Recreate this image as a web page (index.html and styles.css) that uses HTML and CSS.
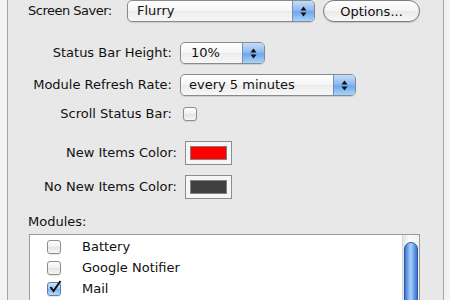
FILE: index.html
```html
<!DOCTYPE html>
<html lang="en">
  <head>
    <meta charset="UTF-8" />
    <title>Preferences</title>
    <link rel="stylesheet" href="styles.css">
  </head>
  <body>
    <div class="window">

      <div class="row row-saver">
        <span class="label label-saver">Screen Saver:</span>
        <div class="popup popup-saver">
          <span class="popup-text">Flurry</span>
          <span class="popup-arrows">
            <svg width="7" height="11" viewBox="0 0 7 11"><path d="M3.5 0.5L6.5 4.5H0.5Z M0.5 6.5H6.5L3.5 10.5Z" fill="#111"/></svg>
          </span>
        </div>
        <button class="push">Options...</button>
      </div>

      <div class="row row-height">
        <span class="label label-mid">Status Bar Height:</span>
        <div class="popup popup-height">
          <span class="popup-text">10%</span>
          <span class="popup-arrows">
            <svg width="7" height="11" viewBox="0 0 7 11"><path d="M3.5 0.5L6.5 4.5H0.5Z M0.5 6.5H6.5L3.5 10.5Z" fill="#111"/></svg>
          </span>
        </div>
      </div>

      <div class="row row-rate">
        <span class="label label-mid">Module Refresh Rate:</span>
        <div class="popup popup-rate">
          <span class="popup-text">every 5 minutes</span>
          <span class="popup-arrows">
            <svg width="7" height="11" viewBox="0 0 7 11"><path d="M3.5 0.5L6.5 4.5H0.5Z M0.5 6.5H6.5L3.5 10.5Z" fill="#111"/></svg>
          </span>
        </div>
      </div>

      <div class="row row-scroll">
        <span class="label label-mid">Scroll Status Bar:</span>
        <span class="check check-scroll"></span>
      </div>

      <div class="row row-color row-color-first">
        <span class="label label-color">New Items Color:</span>
        <span class="well"><span class="swatch swatch-red"></span></span>
      </div>

      <div class="row row-color">
        <span class="label label-color">No New Items Color:</span>
        <span class="well"><span class="swatch swatch-dark"></span></span>
      </div>

      <div class="modules-title">Modules:</div>

      <div class="list">
        <div class="list-rows">
          <div class="item"><span class="check"></span><span class="item-name">Battery</span></div>
          <div class="item"><span class="check"></span><span class="item-name">Google Notifier</span></div>
          <div class="item">
            <span class="check checked">
              <svg class="tick" width="14" height="14" viewBox="0 0 14 14"><path d="M2.5 7L5.5 11L12.5 1" fill="none" stroke="#111" stroke-width="2"/></svg>
            </span>
            <span class="item-name">Mail</span>
          </div>
          <div class="item">
            <span class="check checked">
              <svg class="tick" width="14" height="14" viewBox="0 0 14 14"><path d="M2.5 7L5.5 11L12.5 1" fill="none" stroke="#111" stroke-width="2"/></svg>
            </span>
          </div>
        </div>
        <div class="scrollbar">
          <div class="thumb"></div>
        </div>
      </div>

    </div>
  </body>
</html>
```

FILE: styles.css
```css
html, body{
  margin: 0;
  padding: 0;
  height: 300px;
  overflow: hidden;
  background: #f3f3f3;
}

body{
  font-family: "DejaVu Sans", sans-serif;
  font-size: 13px;
  color: #111111;
}

.window{
  margin-left: 7px;
  width: 435px;
  height: 300px;
  background: #e8e8e8;
  border-left: 1px solid #a6a6a6;
  border-right: 1px solid #a6a6a6;
  overflow: hidden;
}

.row{
  display: flex;
  align-items: center;
  height: 22px;
}

.label{
  flex: none;
  line-height: 16px;
  white-space: nowrap;
}

/* first row */
.row-saver{
  padding-left: 20px;
}

.label-saver{
  width: 91px;
  margin-right: 8px;
  letter-spacing: -0.5px;
}

.popup-saver{
  width: 188px;
}

.push{
  width: 97px;
  height: 22px;
  margin-left: 8px;
  padding: 0;
  border: 1px solid #7c7c7c;
  border-radius: 11px;
  background: linear-gradient(#ffffff, #f4f4f4 50%, #e9e9e9 51%, #f8f8f8);
  box-shadow: 0 1px 1px rgba(0, 0, 0, 0.15);
  font-family: "DejaVu Sans", sans-serif;
  font-size: 13px;
  color: #111111;
}

/* popups */
.popup{
  display: flex;
  height: 22px;
  box-sizing: border-box;
  border: 1px solid #8a8a8a;
  border-radius: 5px;
  background: linear-gradient(#ffffff, #f5f5f5 50%, #ececec 51%, #f7f7f7);
  box-shadow: 0 1px 1px rgba(0, 0, 0, 0.12);
  overflow: hidden;
}

.popup-text{
  flex: 1;
  padding-left: 9px;
  line-height: 20px;
  white-space: nowrap;
}

.popup-arrows{
  width: 21px;
  display: flex;
  align-items: center;
  justify-content: center;
  border-left: 1px solid #6d8fc4;
  background: linear-gradient(#c6ddf7, #8fbcf0 45%, #6ea7ed 55%, #a8d4fb);
}

.row-height{
  margin-top: 20px;
}

.row-rate{
  margin-top: 10px;
}

.label-mid{
  width: 164px;
  margin-right: 8px;
  text-align: right;
}

.popup-height{
  width: 85px;
}

.popup-height .popup-text{
  padding-left: 10px;
}

.popup-rate{
  width: 176px;
}

.popup-rate .popup-text{
  padding-left: 8px;
}

/* checkboxes */
.row-scroll{
  margin-top: 7px;
}

.check{
  position: relative;
  flex: none;
  width: 12px;
  height: 12px;
  border: 1px solid #8e8e8e;
  border-radius: 3px;
  background: linear-gradient(#ffffff, #f0f0f0 50%, #e4e4e4 51%, #f6f6f6);
  box-shadow: 0 1px 1px rgba(0, 0, 0, 0.1);
}

.checked{
  border-color: #5a7fb8;
  background: linear-gradient(#cfe2f8, #9cc4f1 50%, #7fb2ee 51%, #b7dbfb);
}

.check-scroll{
  margin-left: 3px;
}

.tick{
  position: absolute;
  left: 0;
  top: -3px;
}

/* colour wells */
.row-color{
  height: 24px;
  margin-top: 10px;
}

.row-color-first{
  margin-top: 16px;
}

.label-color{
  width: 169px;
  margin-right: 8px;
  text-align: right;
}

.well{
  width: 47px;
  height: 24px;
  box-sizing: border-box;
  padding: 4px;
  border: 1px solid #8c8c8c;
  background: #f6f6f6;
}

.swatch{
  display: block;
  height: 100%;
  box-sizing: border-box;
  border: 1px solid #808080;
}

.swatch-red{
  background: #ff0000;
}

.swatch-dark{
  background: #404040;
}

/* modules list */
.modules-title{
  margin-top: 15px;
  padding-left: 20px;
  line-height: 16px;
}

.list{
  display: flex;
  width: 391px;
  height: 120px;
  margin-top: 4px;
  margin-left: 21px;
  box-sizing: border-box;
  border: 1px solid #9a9a9a;
  background: #ffffff;
}

.list-rows{
  flex: 1;
  padding-top: 1px;
}

.item{
  display: flex;
  align-items: center;
  height: 21px;
  padding-left: 17px;
}

.item-name{
  margin-left: 21px;
  line-height: 16px;
}

.scrollbar{
  width: 14px;
  padding: 7px 1px 0 1px;
  border-left: 1px solid #d6d6d6;
  background: linear-gradient(90deg, #e4e4e4, #fafafa 40%, #f2f2f2);
}

.thumb{
  height: 120px;
  box-sizing: border-box;
  border: 1px solid #2c58b0;
  border-radius: 7px;
  background: linear-gradient(90deg, #3f74d4, #8dbdf3 35%, #a9d0f7 50%, #6aa1ea 75%, #3a6fd0);
}
```
